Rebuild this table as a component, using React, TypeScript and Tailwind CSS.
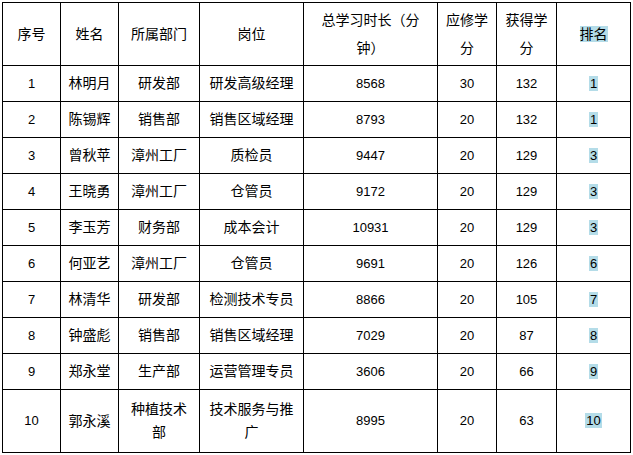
const ROWS: [string, string, string[], string[], string, string, string, string][] = [
  ["1", "林明月", ["研发部"], ["研发高级经理"], "8568", "30", "132", "1"],
  ["2", "陈锡辉", ["销售部"], ["销售区域经理"], "8793", "20", "132", "1"],
  ["3", "曾秋苹", ["漳州工厂"], ["质检员"], "9447", "20", "129", "3"],
  ["4", "王晓勇", ["漳州工厂"], ["仓管员"], "9172", "20", "129", "3"],
  ["5", "李玉芳", ["财务部"], ["成本会计"], "10931", "20", "129", "3"],
  ["6", "何亚艺", ["漳州工厂"], ["仓管员"], "9691", "20", "126", "6"],
  ["7", "林清华", ["研发部"], ["检测技术专员"], "8866", "20", "105", "7"],
  ["8", "钟盛彪", ["销售部"], ["销售区域经理"], "7029", "20", "87", "8"],
  ["9", "郑永堂", ["生产部"], ["运营管理专员"], "3606", "20", "66", "9"],
  ["10", "郭永溪", ["种植技术", "部"], ["技术服务与推", "广"], "8995", "20", "63", "10"],
];

const WIDTHS = [58, 58, 81, 104, 134, 59, 60, 74];

function Lines({ parts }: { parts: string[] }) {
  return (
    <>
      {parts.map((p, i) => (
        <span key={i} className="block">
          {p}
        </span>
      ))}
    </>
  );
}

export default function App() {
  const cell = "border border-black text-center align-middle p-0";
  return (
    <div className="w-[633px] h-[455px] bg-white pl-[2px] pt-[2px] text-black font-['Liberation_Sans','Noto_Sans_CJK_SC',sans-serif]">
      <table className="table-fixed border-collapse w-[629px] text-[13px]">
        <colgroup>
          {WIDTHS.map((w, i) => (
            <col key={i} style={{ width: w }} />
          ))}
        </colgroup>
        <thead>
          <tr className="h-[63px] text-[14px] leading-[28px]">
            <th className={cell + " font-normal"}>序号</th>
            <th className={cell + " font-normal"}>姓名</th>
            <th className={cell + " font-normal"}>所属部门</th>
            <th className={cell + " font-normal"}>岗位</th>
            <th className={cell + " font-normal"}>
              <Lines parts={["总学习时长（分", "钟）"]} />
            </th>
            <th className={cell + " font-normal"}>
              <Lines parts={["应修学", "分"]} />
            </th>
            <th className={cell + " font-normal"}>
              <Lines parts={["获得学", "分"]} />
            </th>
            <th className={cell + " font-normal"}>
              <span className="bg-[#b4dce8]">排名</span>
            </th>
          </tr>
        </thead>
        <tbody>
          {ROWS.map((r) => {
            const tall = r[2].length > 1;
            return (
              <tr key={r[0]} className={tall ? "h-[63px]" : "h-[36px]"}>
                <td className={cell}>{r[0]}</td>
                <td className={cell + " text-[14px]"}>{r[1]}</td>
                <td className={cell + " text-[14px] leading-[23px]"}>
                  <Lines parts={r[2]} />
                </td>
                <td className={cell + " text-[14px] leading-[23px]"}>
                  <Lines parts={r[3]} />
                </td>
                <td className={cell}>{r[4]}</td>
                <td className={cell}>{r[5]}</td>
                <td className={cell}>{r[6]}</td>
                <td className={cell}>
                  <span className="bg-[#b4dce8] px-[1px]">{r[7]}</span>
                </td>
              </tr>
            );
          })}
        </tbody>
      </table>
    </div>
  );
}
